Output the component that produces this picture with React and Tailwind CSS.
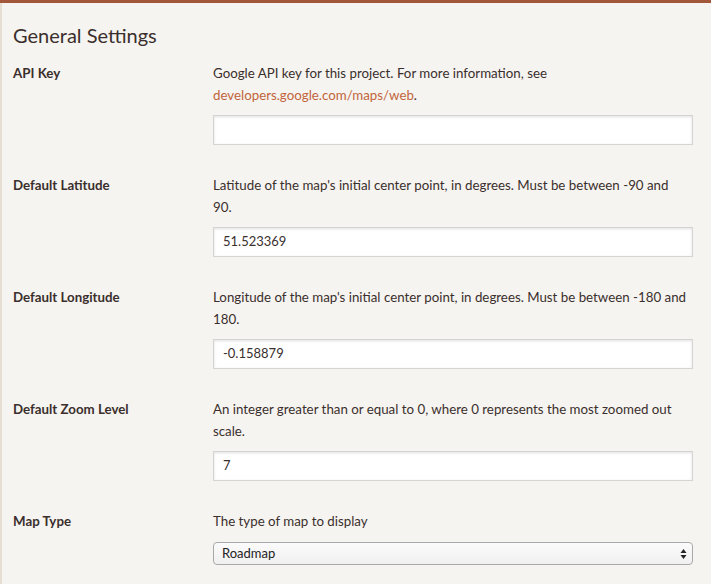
import React from "react";

function Row({ label, children }) {
  return (
    <div className="grid grid-cols-[200px_1fr] pb-[29px]">
      <div className="font-bold text-[13.3px] leading-[22px] text-[#3a2f2d]">{label}</div>
      <div>{children}</div>
    </div>
  );
}

function TextInput({ value }) {
  return (
    <div className="mt-[9px] h-[30px] bg-white border border-[#d6d4d2] shadow-[inset_0_1px_3px_rgba(0,0,0,0.12)] flex items-center pl-[9px] text-[13px] text-[#3a2f2d]">
      {value}
    </div>
  );
}

const desc = "text-[13.3px] leading-[22px] text-[#3a2f2d]";

export default function App() {
  return (
    <div
      className="w-[711px] h-[584px] overflow-hidden bg-[#f6f4f0] border-t-[3px] border-[#a2573a] flex"
      style={{ fontFamily: "Lato, 'Open Sans', sans-serif" }}
    >
      <div className="w-[2px] bg-[#e4dfd2] shrink-0" />
      <div className="flex-1 pl-[11px] pr-[18px]">
        <h1 className="text-[20px] leading-[28px] pt-[18px] pb-[13px] text-[#3a2f2d] font-normal">General Settings</h1>
        <Row label="API Key">
          <p className={desc}>
            Google API key for this project. For more information, see
            <br />
            <span className="text-[#c1643c]">developers.google.com/maps/web</span>.
          </p>
          <TextInput value="" />
        </Row>
        <Row label="Default Latitude">
          <p className={desc}>
            Latitude of the map's initial center point, in degrees. Must be between -90 and
            <br />
            90.
          </p>
          <TextInput value="51.523369" />
        </Row>
        <Row label="Default Longitude">
          <p className={desc}>
            Longitude of the map's initial center point, in degrees. Must be between -180 and
            <br />
            180.
          </p>
          <TextInput value="-0.158879" />
        </Row>
        <Row label="Default Zoom Level">
          <p className={desc}>
            An integer greater than or equal to 0, where 0 represents the most zoomed out
            <br />
            scale.
          </p>
          <TextInput value="7" />
        </Row>
        <Row label="Map Type">
          <p className={desc}>The type of map to display</p>
          <div className="mt-[10px] h-[23px] rounded-[4px] border border-[#a9a9a9] bg-gradient-to-b from-[#fbfbfb] to-[#f0f0f0] flex items-center justify-between pl-[8px] pr-[5px] text-[13px] text-[#222]">
            <span>Roadmap</span>
            <svg width="7" height="12" viewBox="0 0 7 12">
              <path d="M3.5 1 L6.5 5 L0.5 5 Z" fill="#222" />
              <path d="M3.5 11 L6.5 7 L0.5 7 Z" fill="#222" />
            </svg>
          </div>
        </Row>
      </div>
    </div>
  );
}
